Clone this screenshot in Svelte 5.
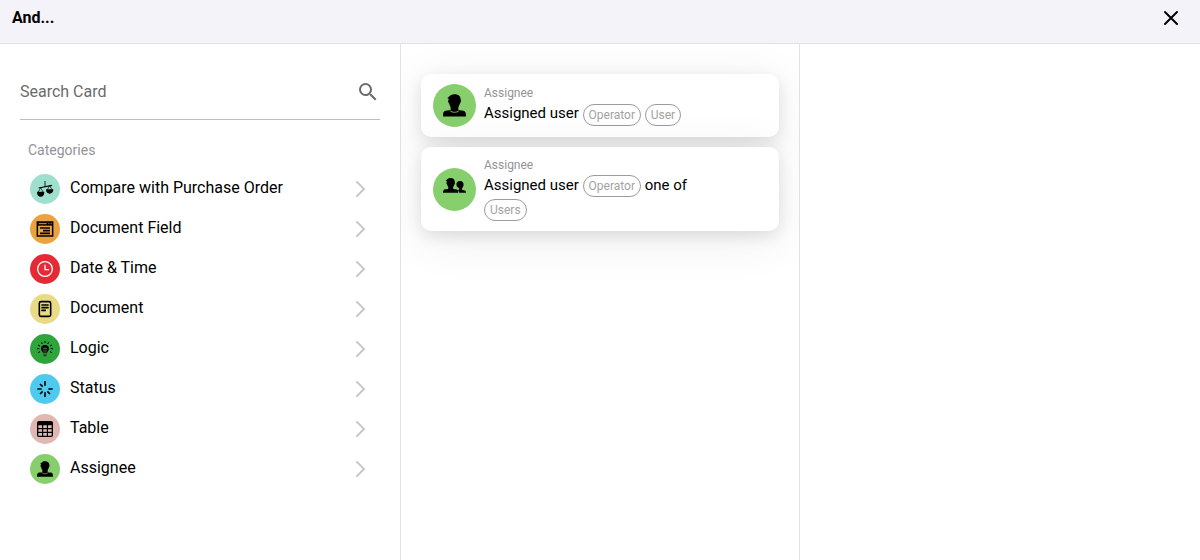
<script>
  const categories = [
    { name: 'Compare with Purchase Order', icon: 'scales', color: '#9fdfcd' },
    { name: 'Document Field', icon: 'field', color: '#eca33f' },
    { name: 'Date & Time', icon: 'clock', color: '#e32b35' },
    { name: 'Document', icon: 'document', color: '#e9da85' },
    { name: 'Logic', icon: 'bulb', color: '#2fa43a' },
    { name: 'Status', icon: 'status', color: '#4dcaee' },
    { name: 'Table', icon: 'table', color: '#e0b8b1' },
    { name: 'Assignee', icon: 'user', color: '#87cf6d' }
  ];

  const cards = [
    { group: 'Assignee', icon: 'user', parts: [{ text: 'Assigned user' }, { slot: 'Operator' }, { slot: 'User' }] },
    { group: 'Assignee', icon: 'users', parts: [{ text: 'Assigned user' }, { slot: 'Operator' }, { text: 'one of' }, { slot: 'Users' }] }
  ];

  let query = $state('');
</script>

{#snippet glyph(name)}
  <svg class="glyph" viewBox="0 0 24 24" aria-hidden="true">
    {#if name === 'scales'}
      <path d="M12 0v9" stroke="#20352f" stroke-width="1.6" fill="none" />
      <path d="M2.500 10.500 22.500 6.500" stroke="#000" stroke-width="1.8" fill="none" />
      <path d="M5.500 10 2 16.500M5.500 10 9 16.500M19 7l-3.500 6M19 7l3.500 6" stroke="#000" stroke-width="1" fill="none" />
      <path d="M0 16h11c0 5-2 7.500-5.500 7.500S0 21 0 16ZM13.500 12.500h11c0 4.500-2 6.500-5.500 6.500s-5.500-2-5.500-6.500Z" />
    {:else if name === 'field'}
      <path d="M0.500 1.500h23v21H0.500Z" fill="none" stroke="#000" stroke-width="2.200" />
      <path d="M1 2h22v5H1Z" />
      <path d="M2.500 4h12M17 4h1.500M20.500 4H22" stroke="#eca33f" stroke-width="1.400" />
      <path d="M4.500 10.500h15M9 14.500h10.500M4.500 18.500h15" stroke="#000" stroke-width="2.500" />
    {:else if name === 'clock'}
      <circle cx="12" cy="12" r="11" fill="none" stroke="#fff" stroke-width="1.900" />
      <path d="M12 5.500V13h6" fill="none" stroke="#fff" stroke-width="1.900" />
    {:else if name === 'document'}
      <rect x="3.500" y="1" width="17" height="22" rx="2.500" fill="none" stroke="#000" stroke-width="2.400" />
      <path d="M6.500 6h11M6.500 10h11M6.500 14h7" stroke="#000" stroke-width="2.500" />
    {:else if name === 'bulb'}
      <path d="M12 6c4 0 6 2.500 6 5.500 0 3-2.500 4-3 6.500H9c-.5-2.500-3-3.500-3-6.500C6 8.500 8 6 12 6Z" />
      <path d="M9 19.500h6M9.500 22h5" stroke="#233d27" stroke-width="1.800" />
      <path d="M12 0v3M6.500 1.500l1.500 3M17.500 1.500l-1.500 3M1.500 6l3 1.700M22.500 6l-3 1.700M0 11.500h3.500M20.500 11.500H24M1.500 17.500l3-1.500M22.500 17.500l-3-1.500" stroke="#000" stroke-width="1.500" />
      <path d="m9 10 1.500 2 1.500-2 1.500 2 1.500-2M10.500 12.500v6M13.500 12.500v6" fill="none" stroke="#718e74" stroke-width="1" />
    {:else if name === 'status'}
      <path d="M12 0v7M12 17v7M0.500 12H7M17 12h6.500M4.500 4.500 8.500 8.500M4.500 19.500l4-4M19.500 19.500l-4-4" stroke="#000" stroke-width="2.400" fill="none" />
    {:else if name === 'table'}
      <path d="M3 0h18a3 3 0 0 1 3 3v18a3 3 0 0 1-3 3H3a3 3 0 0 1-3-3V3a3 3 0 0 1 3-3Z" />
      <path d="M2 6.500h5.500v4H2ZM9.300 6.500h5.500v4H9.300ZM16.500 6.500H22v4h-5.500ZM2 12.200h5.500v4H2ZM9.300 12.200h5.500v4H9.300ZM16.500 12.200H22v4h-5.500ZM2 18h5.500v4H2ZM9.300 18h5.500v4H9.300ZM16.500 18H22v4h-5.500Z" fill="#e0b8b1" />
    {:else if name === 'user'}
      <path d="M6.200 5.200 4.400 4.300C6.300 3.500 7.300 0.200 12 0.200c4.200 0 6.500 2.200 6.500 5.600 0 1 .5 1.500.1 2.500-.4.900-.9 1-1.200 2.200-.3 1.800-1 2.300-1.400 3.500v2.400c.8.600 2.500.7 4 .8 3.300.3 4 1.800 4 6.400H0c0-4.600.7-6.100 4-6.400 1.500-.1 3.200-.2 4-.8V14c-.4-1.200-1.100-1.700-1.400-3.500-.3-1.200-.8-1.300-1.200-2.200-.4-1 .2-1.800.8-3.100Z" />
      <path d="M7 16.900c1.300 1.700 3.200 2.200 5 2.200s3.700-.5 5-2.200" fill="none" stroke="#87cf6d" stroke-width=".9" />
    {:else if name === 'users'}
      <path d="M4 3.200 2.800 2.700C4.200 2 5 .1 8 .1c2.800 0 4.300 1.500 4.300 4 0 .8.300 1.100.1 1.800-.2.600-.6.700-.8 1.500-.2 1.200-.8 1.600-1 2.400v1.300c.6.500 1.500.5 2.900.7 1.900.2 2.500 1.400 2.500 3.700H0c0-2.300.6-3.500 2.500-3.700 1.400-.2 2.400-.2 3-.7V9.800c-.2-.8-.8-1.200-1-2.400-.2-.8-.6-.9-.8-1.500-.2-.7.100-1.300.3-2.700ZM14 6.500C14 4 15.500 3 17.800 3s3.700 1.400 3.700 3.500c0 2.300-1 3.200-1.800 4.400v1.200c.4.500 1 .6 2 .7 1.800.2 2.300 1.100 2.300 2.700h-7c-.2-1.300-.7-2.200-1.700-2.800 1-.3 1.300-.6 1.500-1v-1.300C14.900 9.800 14 8.800 14 6.500Z" />
    {/if}
  </svg>
{/snippet}

<div class="dialog">
  <header>
    <h1>And...</h1>
    <button class="close" aria-label="Close">
      <svg viewBox="0 0 16 16" width="16" height="16" aria-hidden="true">
        <path d="m2 2 12 12M14 2 2 14" fill="none" stroke="#000" stroke-width="2" stroke-linecap="round" />
      </svg>
    </button>
  </header>

  <main>
    <section>
      <label class="search">
        <input type="text" placeholder="Search Card" aria-label="Search Card" bind:value={query} />
        <svg viewBox="0 0 24 24" width="24" height="24" aria-hidden="true">
          <path fill="#6b6b6b" d="M15.500 14h-.79l-.28-.27A6.471 6.471 0 0 0 16 9.500 6.500 6.500 0 1 0 9.500 16c1.610 0 3.090-.59 4.230-1.570l.27.28v.79l5 4.990L20.490 19l-4.990-5zm-6 0C7.010 14 5 11.990 5 9.500S7.010 5 9.500 5 14 7.010 14 9.500 11.990 14 9.500 14z" />
        </svg>
      </label>
      <h2>Categories</h2>
      <ul>
        {#each categories as category}
          <li>
            <button class="category">
              <span class="badge" style:background={category.color}>{@render glyph(category.icon)}</span>
              <span class="name">{category.name}</span>
              <svg viewBox="0 0 12 18" width="12" height="18" aria-hidden="true">
                <path d="m3 2 7 7-7 7" fill="none" stroke="#c7c7cc" stroke-width="2" stroke-linecap="round" />
              </svg>
            </button>
          </li>
        {/each}
      </ul>
    </section>

    <section class="cards">
      {#each cards as card}
        <button class="card">
          <span class="badge large">{@render glyph(card.icon)}</span>
          <span class="body">
            <span class="group">{card.group}</span>
            <span class="title">
              {#each card.parts as part}
                {#if part.slot}<span class="pill">{part.slot}</span>{:else}{part.text}{/if}{' '}
              {/each}
            </span>
          </span>
        </button>
      {/each}
    </section>

    <section></section>
  </main>
</div>

<style>
  :global(body) {
    margin: 0;
    background: #fff;
  }
  .dialog {
    display: flex;
    flex-direction: column;
    min-height: 100vh;
    font-family: Roboto, 'Liberation Sans', sans-serif;
    font-size: 16px;
    color: #000;
  }
  button {
    border: 0;
    padding: 0;
    background: none;
    font: inherit;
    color: inherit;
    text-align: left;
    cursor: pointer;
  }
  header {
    display: flex;
    justify-content: space-between;
    align-items: flex-start;
    box-sizing: border-box;
    height: 44px;
    padding: 8px 20px 0 12px;
    background: #f4f3fa;
    border-bottom: 1px solid #e2e2e4;
  }
  h1 {
    margin: 0;
    font-size: 16px;
    line-height: 20px;
    font-weight: 700;
  }
  .close {
    display: flex;
    align-items: center;
    justify-content: center;
    width: 18px;
    height: 20px;
  }
  main {
    flex: 1;
    display: grid;
    grid-template-columns: repeat(3, 1fr);
  }
  section {
    min-width: 0;
    padding: 20px;
  }
  .search {
    display: flex;
    align-items: center;
    height: 55px;
    border-bottom: 1px solid #bdbdbd;
  }
  input {
    flex: 1;
    min-width: 0;
    border: 0;
    outline: 0;
    padding: 0;
    background: none;
    font: inherit;
    line-height: 24px;
    color: #333;
  }
  input::placeholder {
    color: #6b6b6b;
    opacity: 1;
  }
  h2 {
    margin: 20px 0 9px 8px;
    font-size: 14px;
    line-height: 20px;
    font-weight: 400;
    color: #939398;
  }
  ul {
    list-style: none;
    margin: 0;
    padding: 0;
  }
  .category {
    display: flex;
    align-items: center;
    width: 100%;
    height: 40px;
    gap: 10px;
    padding: 0 14px 0 10px;
  }
  .name {
    flex: 1;
    line-height: 20px;
    padding-bottom: 2px;
  }
  .badge {
    flex: none;
    display: flex;
    align-items: center;
    justify-content: center;
    width: 30px;
    height: 30px;
    border-radius: 50%;
  }
  .glyph {
    width: 16px;
    height: 16px;
    overflow: visible;
  }
  .badge.large {
    width: 43px;
    height: 43px;
    background: #87cf6d;
  }
  .large .glyph {
    width: 23px;
    height: 23px;
  }
  .cards {
    display: flex;
    flex-direction: column;
    gap: 10px;
    padding-top: 30px;
    overflow: hidden;
    border: solid #e2e2e4;
    border-width: 0 1px;
  }
  .card {
    display: flex;
    align-items: center;
    gap: 8px;
    padding: 10px 48px 10px 12px;
    border-radius: 10px;
    background: #fff;
    box-shadow: 0 5px 16px rgba(0, 0, 0, 0.1), 0 8px 50px rgba(0, 0, 0, 0.08);
  }
  .body {
    display: flex;
    flex-direction: column;
    min-width: 0;
  }
  .group {
    font-size: 12px;
    line-height: 16px;
    color: #939398;
  }
  .title {
    font-size: 15px;
    line-height: 24px;
  }
  .pill {
    display: inline-block;
    box-sizing: border-box;
    height: 22px;
    padding: 0 5px;
    border: 1px solid #9c9c9c;
    border-radius: 11px;
    font-size: 12px;
    line-height: 20px;
    vertical-align: middle;
    color: #a3a3a3;
  }
</style>
